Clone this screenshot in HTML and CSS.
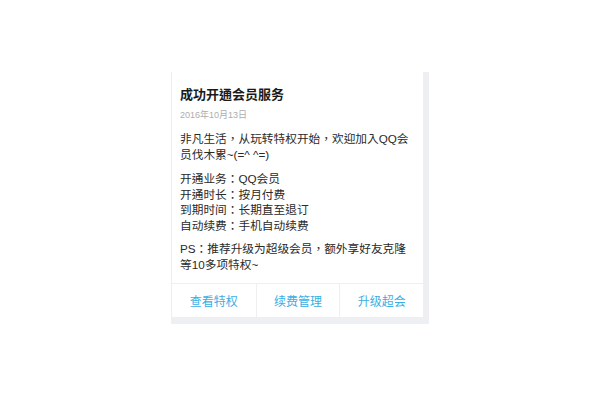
FILE: index.html
```html
<!DOCTYPE html>
<html lang="zh-TW">
<head>
<meta charset="utf-8">
<title>成功开通会员服务</title>
<link rel="stylesheet" href="styles.css">
</head>
<body>
<div class="shell">
  <div class="card">
    <div class="content">
      <h1 class="title">成功开通会员服务</h1>
      <div class="date">2016年10月13日</div>
      <p class="para first">非凡生活，从玩转特权开始，欢迎加入QQ会员伐木累~(=^ ^=)</p>
      <p class="para info">开通业务：QQ会员<br>开通时长：按月付费<br>到期时间：长期直至退订<br>自动续费：手机自动续费</p>
      <p class="para ps">PS：推荐升级为超级会员，额外享好友克隆等10多项特权~</p>
    </div>
    <div class="actions">
      <a class="action">查看特权</a>
      <a class="action">续费管理</a>
      <a class="action">升级超会</a>
    </div>
  </div>
</div>
</body>
</html>
```

FILE: styles.css
```css
html, body {
  margin: 0;
  padding: 0;
  background: #ffffff;
}
body {
  font-family: "Liberation Sans", "Noto Sans CJK TC", sans-serif;
  color: #333333;
}
.shell {
  margin: 72px 0 0 171px;
  width: 252px;
  padding: 0 6px 7px 0;
  background: #eeeff2;
}
.card {
  background: #ffffff;
  border-left: 1px solid #eeeeef;
  display: flex;
  flex-direction: column;
}
.content {
  padding: 14px 8px 10px 8px;
}
.title {
  margin: 0;
  font-size: 13px;
  line-height: 18px;
  font-weight: bold;
  color: #1a1a1a;
}
.date {
  margin-top: 5px;
  font-size: 9px;
  line-height: 12px;
  color: #adadad;
}
.para {
  margin: 0;
  font-size: 11.7px;
  line-height: 16px;
  color: #2a2a2a;
}
.first { margin-top: 10px; }
.info { margin-top: 8px; line-height: 15.7px; }
.ps { margin-top: 7px; }
.actions {
  display: grid;
  grid-template-columns: 1fr 1fr 1fr;
  border-top: 1px solid #efefef;
  height: 33px;
}
.action {
  display: flex;
  align-items: center;
  justify-content: center;
  font-size: 12px;
  color: #3aaee3;
  border-left: 1px solid #efefef;
}
.action:first-child { border-left: none; }
```
